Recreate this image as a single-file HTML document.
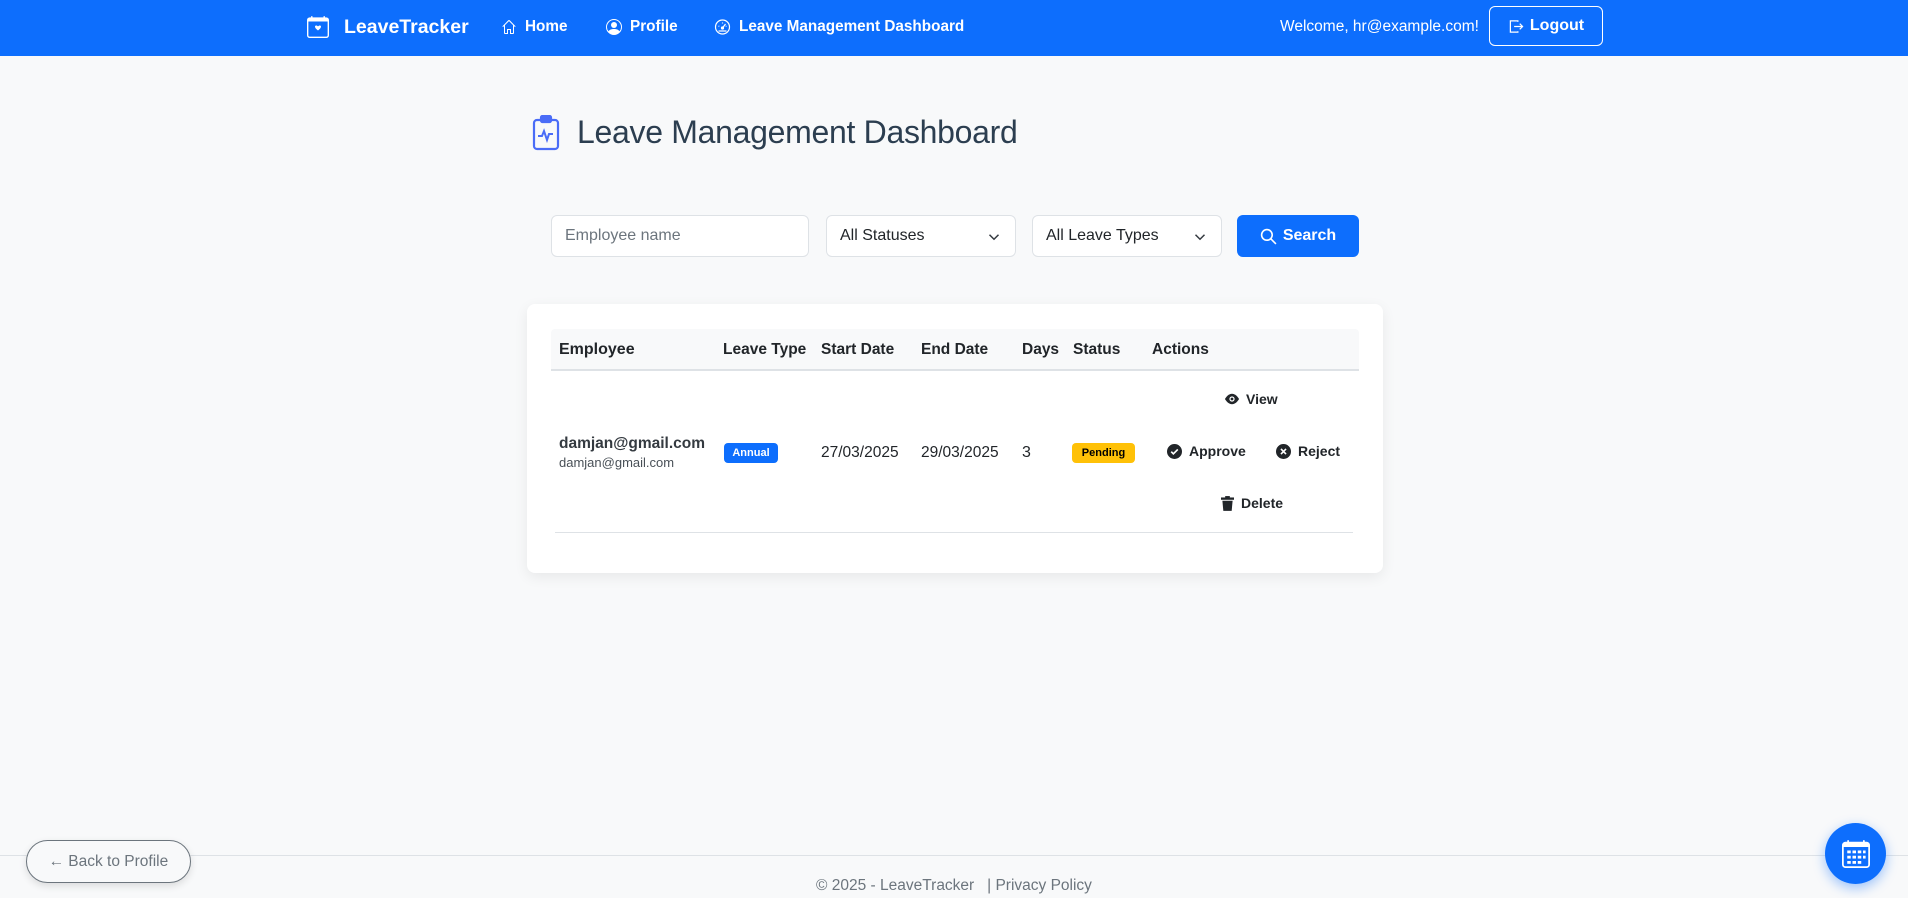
<!DOCTYPE html>
<html><head><meta charset="utf-8">
<style>
*{box-sizing:border-box;margin:0;padding:0}
body{width:1908px;height:898px;overflow:hidden;background:#f8f9fa;font-family:"Liberation Sans",sans-serif;color:#212529;position:relative}
.nav{position:absolute;left:0;top:0;width:1908px;height:56px;background:#0d6efd;color:#fff}
.nav .it{position:absolute;top:0;height:54px;display:flex;align-items:center;font-size:15.3px;font-weight:600}
.nav svg{display:block}
.title{position:absolute;left:532px;top:114px;display:flex;align-items:center}
.title h1{font-size:32px;font-weight:500;color:#2c3e50;margin-left:17px;letter-spacing:-0.3px}
.inp{position:absolute;top:215px;height:42px;border:1px solid #dee2e6;border-radius:6px;background:#fff;font-size:16px;display:flex;align-items:center;padding-left:13px;color:#212529}
.inp svg{position:absolute;right:14px;top:15px}
.btn{position:absolute;left:1237px;top:215px;width:122px;height:42px;background:#0d6efd;border-radius:6px;color:#fff;font-weight:600;font-size:16px;display:flex;align-items:center;justify-content:center;gap:6px}
.card{position:absolute;left:527px;top:304px;width:856px;height:269px;background:#fff;border-radius:8px;box-shadow:0 4px 14px rgba(0,0,0,0.07)}
.th{position:absolute;left:551px;top:329px;width:808px;height:42px;background:#f8f9fa;border-bottom:2px solid #dee2e6;border-radius:4px 4px 0 0}
.t{position:absolute;font-size:16px;white-space:nowrap}
.b{font-weight:700}
.act{position:absolute;font-size:14px;font-weight:600;display:flex;align-items:center;gap:7px;color:#212529}
.footline{position:absolute;left:0;top:855px;width:1908px;height:1px;background:#dee2e6}
</style></head><body>
<div class="nav">
 <div class="it" style="left:307px"><svg width="22" height="22" viewBox="0 0 16 16" fill="#fff"><path d="M3.5 0a.5.5 0 0 1 .5.5V1h8V.5a.5.5 0 0 1 1 0V1h1a2 2 0 0 1 2 2v11a2 2 0 0 1-2 2H2a2 2 0 0 1-2-2V3a2 2 0 0 1 2-2h1V.5a.5.5 0 0 1 .5-.5zM1 4v10a1 1 0 0 0 1 1h12a1 1 0 0 0 1-1V4H1z"/><path d="M8 7.5c1.6-1.6 4 0 0 3-4-3-1.6-4.6 0-3z"/></svg><span style="font-size:19.5px;font-weight:700;margin-left:15px">LeaveTracker</span></div>
 <div class="it" style="left:501px"><svg width="16" height="16" viewBox="0 0 16 16" fill="#fff"><path d="M8.7 1.3a1 1 0 0 0-1.4 0L1.6 7.1a.5.5 0 0 0 .7.7L3 7.1V14a1 1 0 0 0 1 1h3v-4h2v4h3a1 1 0 0 0 1-1V7.1l.7.7a.5.5 0 0 0 .7-.7zM12 14h-2v-4H6v4H4V6.1l4-4 4 4z"/></svg><span style="margin-left:8px">Home</span></div>
 <div class="it" style="left:606px"><svg width="16" height="16" viewBox="0 0 16 16" fill="#fff"><path d="M11 6a3 3 0 1 1-6 0 3 3 0 0 1 6 0"/><path d="M0 8a8 8 0 1 1 16 0A8 8 0 0 1 0 8m8-7a7 7 0 0 0-5.5 11.3C3.2 11.2 4.7 10 8 10s4.8 1.2 5.5 2.3A7 7 0 0 0 8 1"/></svg><span style="margin-left:8px">Profile</span></div>
 <div class="it" style="left:714px"><svg width="17" height="16" viewBox="0 0 16 16" fill="none" stroke="#fff" stroke-width="1.2"><circle cx="8" cy="8" r="7"/><path d="M8 9l3-4"/><circle cx="8" cy="9" r="1" fill="#fff"/><path d="M4 7l.8.4M8 3.5v1M12 7l-.8.4M4 12h8"/></svg><span style="margin-left:8px">Leave Management Dashboard</span></div>
 <div class="it" style="left:1280px;font-weight:400;font-size:15.5px">Welcome, hr@example.com!</div>
 <div style="position:absolute;left:1489px;top:6px;width:114px;height:40px;border:1px solid #fff;border-radius:6px;display:flex;align-items:center;justify-content:center;font-weight:700;font-size:16px;gap:6px"><svg width="16" height="15" viewBox="0 0 16 16" fill="none" stroke="#fff" stroke-width="1.3"><path d="M10 3V2H2v12h8v-1"/><path d="M6 8h9M12 5l3 3-3 3"/></svg>Logout</div>
</div>

<div class="title"><svg width="28" height="36" viewBox="0 0 28 36" fill="none" stroke="#4a6cf7" stroke-width="2.2"><rect x="2" y="5" width="24" height="29" rx="3"/><rect x="9" y="1" width="10" height="6" rx="1.5" fill="#4a6cf7"/><path d="M6 21h4l2-5 3 9 2-6h4" stroke-width="2"/></svg><h1>Leave Management Dashboard</h1></div>

<div class="inp" style="left:551px;width:258px;color:#6c757d">Employee name</div>
<div class="inp" style="left:826px;width:190px">All Statuses<svg width="14" height="12" viewBox="0 0 16 16" fill="none" stroke="#343a40" stroke-width="2"><path d="M2 5l6 6 6-6"/></svg></div>
<div class="inp" style="left:1032px;width:190px">All Leave Types<svg width="14" height="12" viewBox="0 0 16 16" fill="none" stroke="#343a40" stroke-width="2"><path d="M2 5l6 6 6-6"/></svg></div>
<div class="btn"><svg width="17" height="17" viewBox="0 0 16 16" fill="none" stroke="#fff" stroke-width="1.5"><circle cx="6.5" cy="6.5" r="5"/><path d="M10.2 10.2L15 15"/></svg>Search</div>

<div class="card"></div>
<div class="th"></div>
<div class="t b" style="left:559px;top:341px">Employee</div>
<div class="t b" style="left:723px;top:341px;font-size:15.5px">Leave Type</div>
<div class="t b" style="left:821px;top:341px;font-size:15.5px">Start Date</div>
<div class="t b" style="left:921px;top:341px;font-size:15.5px">End Date</div>
<div class="t b" style="left:1022px;top:341px;font-size:15.5px">Days</div>
<div class="t b" style="left:1073px;top:341px;font-size:15.5px">Status</div>
<div class="t b" style="left:1152px;top:341px;font-size:15.5px">Actions</div>

<div class="t b" style="left:559px;top:435px;color:#343a40;font-size:15.5px">damjan@gmail.com</div>
<div class="t" style="left:559px;top:455px;font-size:13px;color:#495057">damjan@gmail.com</div>
<div style="position:absolute;left:724px;top:443px;width:54px;height:20px;background:#0d6efd;color:#fff;border-radius:4px;font-size:11px;font-weight:700;display:flex;align-items:center;justify-content:center">Annual</div>
<div class="t" style="left:821px;top:444px;font-size:15.5px">27/03/2025</div>
<div class="t" style="left:921px;top:444px;font-size:15.5px">29/03/2025</div>
<div class="t" style="left:1022px;top:444px">3</div>
<div style="position:absolute;left:1072px;top:443px;width:63px;height:20px;background:#ffc107;color:#000;border-radius:4px;font-size:11px;font-weight:700;display:flex;align-items:center;justify-content:center">Pending</div>

<div class="act" style="left:1225px;top:391px"><svg width="14" height="12" viewBox="0 0 16 12"><path d="M8 0C3 0 0 6 0 6s3 6 8 6 8-6 8-6-3-6-8-6z" fill="#212529"/><circle cx="8" cy="6" r="3" fill="#fff"/><circle cx="8" cy="6" r="1.6" fill="#212529"/></svg>View</div>
<div class="act" style="left:1167px;top:443px"><svg width="15" height="15" viewBox="0 0 16 16"><circle cx="8" cy="8" r="8" fill="#212529"/><path d="M4.5 8.2l2.3 2.3 4.7-4.7" stroke="#fff" stroke-width="1.8" fill="none"/></svg>Approve</div>
<div class="act" style="left:1276px;top:443px"><svg width="15" height="15" viewBox="0 0 16 16"><circle cx="8" cy="8" r="8" fill="#212529"/><path d="M5.3 5.3l5.4 5.4M10.7 5.3l-5.4 5.4" stroke="#fff" stroke-width="1.7"/></svg>Reject</div>
<div class="act" style="left:1221px;top:495px"><svg width="13" height="15" viewBox="0 0 14 16" fill="#212529"><rect x="0" y="1.5" width="14" height="2.5"/><rect x="4.5" y="0" width="5" height="2"/><path d="M1.5 5h11l-1 11h-9z"/></svg>Delete</div>
<div style="position:absolute;left:555px;top:532px;width:798px;height:1px;background:#dee2e6"></div>

<div class="footline"></div>
<div style="position:absolute;left:26px;top:840px;width:165px;height:43px;border:1px solid #6c757d;border-radius:22px;background:#f8f9fa;box-shadow:0 3px 8px rgba(0,0,0,0.12);display:flex;align-items:center;justify-content:center;font-size:15.5px;color:#6c757d;gap:4px"><span>&#8592;</span>Back to Profile</div>
<div style="position:absolute;left:0;width:1908px;top:877px;text-align:center;font-size:15.5px;color:#6c757d">© 2025 - LeaveTracker &nbsp;&nbsp;| Privacy Policy</div>
<div style="position:absolute;left:1825px;top:823px;width:61px;height:61px;border-radius:50%;background:#0d6efd;box-shadow:0 4px 12px rgba(13,110,253,0.4);display:flex;align-items:center;justify-content:center"><svg width="28" height="28" viewBox="0 0 16 16" fill="#fff"><path d="M3.5 0a.5.5 0 0 1 .5.5V1h8V.5a.5.5 0 0 1 1 0V1h1a2 2 0 0 1 2 2v11a2 2 0 0 1-2 2H2a2 2 0 0 1-2-2V3a2 2 0 0 1 2-2h1V.5a.5.5 0 0 1 .5-.5zM1 4v10a1 1 0 0 0 1 1h12a1 1 0 0 0 1-1V4z"/><g><rect x="3" y="6" width="2" height="1.6"/><rect x="6" y="6" width="2" height="1.6"/><rect x="9" y="6" width="2" height="1.6"/><rect x="12" y="6" width="1.5" height="1.6"/><rect x="3" y="9" width="2" height="1.6"/><rect x="6" y="9" width="2" height="1.6"/><rect x="9" y="9" width="2" height="1.6"/><rect x="12" y="9" width="1.5" height="1.6"/><rect x="3" y="12" width="2" height="1.6"/><rect x="6" y="12" width="2" height="1.6"/><rect x="9" y="12" width="2" height="1.6"/></g></svg></div>
</body></html>
